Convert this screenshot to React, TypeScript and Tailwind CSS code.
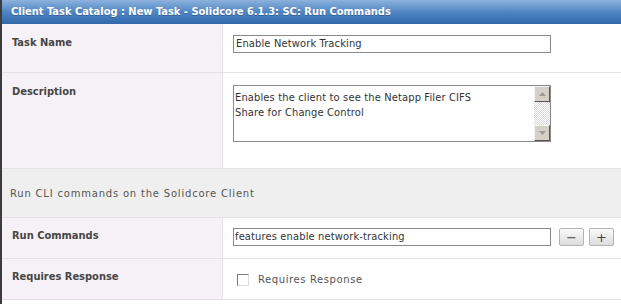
const LABEL = "font-['DejaVu_Sans_Condensed','DejaVu_Sans',sans-serif] font-bold text-[11px] leading-[12px] text-[#464646]";
const INPUT_TEXT = "font-['DejaVu_Sans_Condensed','DejaVu_Sans',sans-serif] text-[11px] tracking-[0.15px] text-[#333]";
const NOTE = "font-['DejaVu_Sans',sans-serif] text-[10px] leading-[12px] tracking-[0.6px] text-[#555]";

function Row({
  label,
  height,
  labelPad,
  children,
}: {
  label: string;
  height: string;
  labelPad: string;
  children: React.ReactNode;
}) {
  return (
    <div className={`flex border-b border-[#e4e1e4] ${height}`}>
      <div className={`w-[221px] shrink-0 bg-[#f6f1f6] border-r border-[#e4e1e4] pl-[10px] ${labelPad} ${LABEL}`}>
        {label}
      </div>
      <div className="flex-1 bg-white">{children}</div>
    </div>
  );
}

function ArrowBox({ up }: { up?: boolean }) {
  return (
    <div className="w-[16px] h-[16px] bg-[#d4d0c8] border-t border-l border-[#f4f4f4] border-r border-b border-r-[#555] border-b-[#555] flex items-center justify-center">
      <svg width="7" height="4" viewBox="0 0 7 4">
        <polygon points={up ? "0,4 7,4 3.5,0" : "0,0 7,0 3.5,4"} fill="#9a9a9a" />
      </svg>
    </div>
  );
}

function SmallButton({ children }: { children: React.ReactNode }) {
  return (
    <div className="w-[25px] h-[18px] rounded-[2px] border border-[#b3b3b3] bg-gradient-to-b from-[#fbfbfb] to-[#dcdcdc] flex items-center justify-center text-[13px] leading-none text-[#444] font-['DejaVu_Sans',sans-serif]">
      {children}
    </div>
  );
}

export default function App() {
  return (
    <div className="w-[621px] h-[304px] bg-white flex overflow-hidden">
      <div className="w-[2px] shrink-0 bg-[#3c3c3c]" />
      <div className="flex-1 flex flex-col">
        {/* ── Title bar ─────────────────────────────── */}
        <div className="h-[24px] shrink-0 bg-gradient-to-b from-[#8db2dc] via-[#4f85c3] to-[#3068aa] pl-[9px] flex items-center">
          <span className="font-['DejaVu_Sans_Condensed','DejaVu_Sans',sans-serif] font-bold text-[11px] text-white whitespace-nowrap [text-shadow:0_1px_0_rgba(0,0,0,0.25)]">
            Client Task Catalog : New Task - Solidcore 6.1.3: SC: Run Commands
          </span>
        </div>

        <Row label="Task Name" height="h-[49px]" labelPad="pt-[13px]">
          <div className="pl-[10px] pt-[11px]">
            <div className={`w-[318px] h-[18px] border border-[#8a8a8a] px-[2px] flex items-center ${INPUT_TEXT}`}>
              Enable Network Tracking
            </div>
          </div>
        </Row>

        <Row label="Description" height="h-[96px]" labelPad="pt-[13px]">
          <div className="pl-[10px] pt-[12px]">
            <div className="w-[318px] h-[57px] border border-[#8a8a8a] flex">
              <div className={`flex-1 pl-[1px] pt-[4px] leading-[15px] ${INPUT_TEXT}`}>
                Enables the client to see the Netapp Filer CIFS
                <br />
                Share for Change Control
              </div>
              <div className="w-[16px] flex flex-col bg-[repeating-conic-gradient(#d8d8d8_0_25%,#ffffff_0_50%)] bg-[length:2px_2px]">
                <ArrowBox up />
                <div className="flex-1" />
                <ArrowBox />
              </div>
            </div>
          </div>
        </Row>

        {/* ── Section note ──────────────────────────── */}
        <div className={`h-[49px] shrink-0 bg-[#efefef] border-b border-[#e4e1e4] pl-[8px] pt-[19px] ${NOTE} tracking-[0.8px]`}>
          Run CLI commands on the Solidcore Client
        </div>

        <Row label="Run Commands" height="h-[41px]" labelPad="pt-[12px]">
          <div className="pl-[10px] pt-[10px] flex items-start">
            <div className={`w-[318px] h-[18px] border border-[#8a8a8a] px-[1px] flex items-center ${INPUT_TEXT}`}>
              features enable network-tracking
            </div>
            <div className="ml-[8px] flex gap-[5px]">
              <SmallButton>−</SmallButton>
              <SmallButton>+</SmallButton>
            </div>
          </div>
        </Row>

        <Row label="Requires Response" height="h-[41px]" labelPad="pt-[12px]">
          <div className="pl-[14px] pt-[15px] flex items-center">
            <div className="w-[12px] h-[12px] border border-[#7a7a7a] border-r-[#dcdcdc] border-b-[#dcdcdc] bg-white" />
            <span className={`ml-[9px] ${NOTE}`}>Requires Response</span>
          </div>
        </Row>
      </div>
    </div>
  );
}
